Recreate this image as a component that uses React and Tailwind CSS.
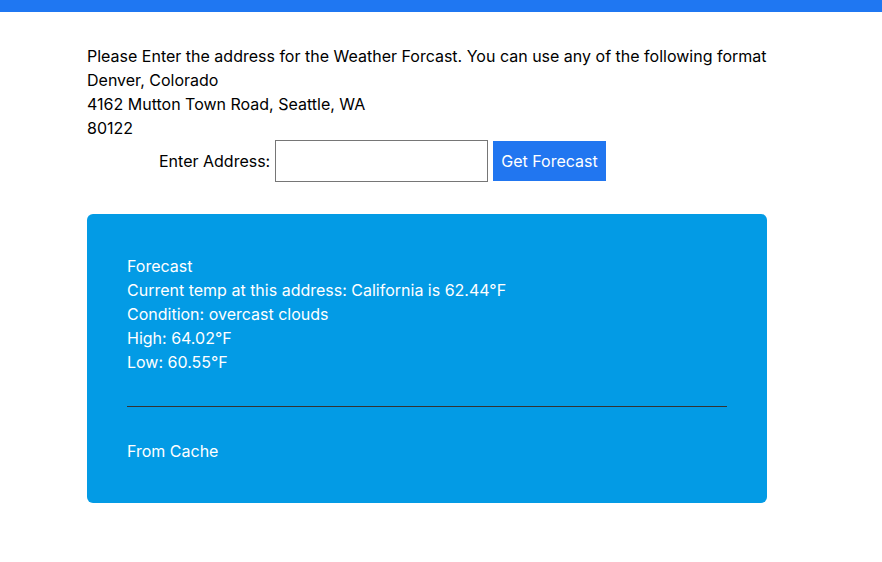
import React, { useState } from 'react';

const App = () => {
  const [address, setAddress] = useState('');

  return (
    <div className="min-h-[562px] bg-white text-black" style={{ fontFamily: 'Inter, "Noto Sans", sans-serif' }}>
      <div className="h-3 bg-[#1f77f2]" />

      <div className="ml-[87px] w-[680px] pt-8 text-base leading-6">
        <p>Please Enter the address for the Weather Forcast. You can use any of the following format</p>
        <p>Denver, Colorado</p>
        <p>4162 Mutton Town Road, Seattle, WA</p>
        <p>80122</p>

        <div className="flex items-center pl-[72px]">
          <label htmlFor="address" className="mr-[5px]">Enter Address:</label>
          <input
            id="address"
            value={address}
            onChange={(e) => setAddress(e.target.value)}
            className="h-[42px] w-[213px] border border-[#767676] bg-white px-2 outline-none"
          />
          <button className="ml-[5px] h-10 bg-[#2176f0] px-2 text-white">Get Forecast</button>
        </div>

        <div className="mt-8 rounded-md bg-[#039be5] px-10 pt-10 pb-10 text-white">
          <p>Forecast</p>
          <p>Current temp at this address: California is 62.44°F</p>
          <p>Condition: overcast clouds</p>
          <p>High: 64.02°F</p>
          <p>Low: 60.55°F</p>
          <hr className="my-8 border-t border-[#333]" />
          <p>From Cache</p>
        </div>
      </div>
    </div>
  );
};

export default App;
